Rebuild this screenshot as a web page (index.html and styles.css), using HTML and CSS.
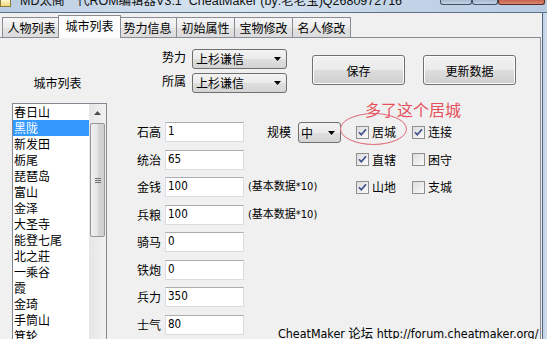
FILE: index.html
```html
<!DOCTYPE html>
<html>
<head>
<meta charset="utf-8">
<link rel="stylesheet" href="styles.css">
</head>
<body>
<div class="window">
  <div class="titlebar">
    <div class="app-icon"></div>
    <div class="title">MD太阁一代ROM编辑器V3.1&nbsp; CheatMaker (by:老老宝)Q2680972716</div>
    <div class="caption">
      <span class="cap min"></span><span class="cap max"></span><span class="cap close"></span>
    </div>
  </div>
  <div class="body">
    <div class="client">
      <div class="tabs">
        <div class="tab">人物列表</div>
        <div class="tab active">城市列表</div>
        <div class="tab">势力信息</div>
        <div class="tab">初始属性</div>
        <div class="tab">宝物修改</div>
        <div class="tab">名人修改</div>
      </div>
      <div class="panel">
        <div class="left">
          <div class="list-title">城市列表</div>
          <div class="listbox">
            <ul class="items">
              <li>春日山</li>
              <li class="sel">黑陇</li>
              <li>新发田</li>
              <li>栃尾</li>
              <li>琵琶岛</li>
              <li>富山</li>
              <li>金泽</li>
              <li>大圣寺</li>
              <li>能登七尾</li>
              <li>北之莊</li>
              <li>一乘谷</li>
              <li>霞</li>
              <li>金琦</li>
              <li>手筒山</li>
              <li>箕轮</li>
            </ul>
            <div class="vscroll">
              <div class="sb-btn"><svg width="7" height="4" viewBox="0 0 7 4"><path d="M0 4 L3.5 0 L7 4 Z" fill="#4d4d4d"/></svg></div>
              <div class="thumb"><div class="grip"><i></i><i></i><i></i></div></div>
            </div>
          </div>
        </div>
        <div class="right">
          <div class="top">
            <div class="combos">
              <div class="crow"><span class="clabel">势力</span><div class="combo wide"><span>上杉谦信</span><svg class="arrow" width="7" height="4" viewBox="0 0 7 4"><path d="M0 0 L7 0 L3.5 4 Z" fill="#000"/></svg></div></div>
              <div class="crow"><span class="clabel">所属</span><div class="combo wide"><span>上杉谦信</span><svg class="arrow" width="7" height="4" viewBox="0 0 7 4"><path d="M0 0 L7 0 L3.5 4 Z" fill="#000"/></svg></div></div>
            </div>
            <div class="buttons">
              <div class="btn">保存</div>
              <div class="btn">更新数据</div>
            </div>
          </div>
          <div class="form">
            <span class="flabel">石高</span><div class="input">1</div>
            <div class="scale"><span class="slabel">规模</span><div class="combo small"><span>中</span><svg class="arrow" width="7" height="4" viewBox="0 0 7 4"><path d="M0 0 L7 0 L3.5 4 Z" fill="#000"/></svg></div></div>
            <div class="cb"><span class="box on"><svg width="11" height="11" viewBox="0 0 11 11"><path d="M2 5.2 L4.3 7.8 L9 2.2" fill="none" stroke="#3b4f8a" stroke-width="1.7"/></svg></span>居城</div>
            <div class="cb"><span class="box on"><svg width="11" height="11" viewBox="0 0 11 11"><path d="M2 5.2 L4.3 7.8 L9 2.2" fill="none" stroke="#3b4f8a" stroke-width="1.7"/></svg></span>连接</div>

            <span class="flabel">统治</span><div class="input">65</div>
            <div class="empty"></div>
            <div class="cb"><span class="box on"><svg width="11" height="11" viewBox="0 0 11 11"><path d="M2 5.2 L4.3 7.8 L9 2.2" fill="none" stroke="#3b4f8a" stroke-width="1.7"/></svg></span>直辖</div>
            <div class="cb"><span class="box"></span>困守</div>

            <span class="flabel">金钱</span><div class="input">100</div>
            <div class="note">(基本数据*10)</div>
            <div class="cb"><span class="box on"><svg width="11" height="11" viewBox="0 0 11 11"><path d="M2 5.2 L4.3 7.8 L9 2.2" fill="none" stroke="#3b4f8a" stroke-width="1.7"/></svg></span>山地</div>
            <div class="cb"><span class="box"></span>支城</div>

            <span class="flabel">兵粮</span><div class="input">100</div>
            <div class="note full">(基本数据*10)</div>

            <span class="flabel">骑马</span><div class="input">0</div><div class="rest"></div>
            <span class="flabel">铁炮</span><div class="input">0</div><div class="rest"></div>
            <span class="flabel">兵力</span><div class="input">350</div><div class="rest"></div>
            <span class="flabel">士气</span><div class="input">80</div>
            <div class="footer">CheatMaker 论坛 http://forum.cheatmaker.org/</div>
          </div>
          <div class="ring"></div>
          <div class="remark">多了这个居城</div>
        </div>
      </div>
    </div>
    <div class="frame-right"></div>
  </div>
</div>
</body>
</html>
```
FILE: styles.css
```css
* { box-sizing: border-box; }
html, body { margin: 0; padding: 0; }
body {
  width: 547px;
  height: 339px;
  overflow: hidden;
  font-family: "Noto Sans CJK SC", sans-serif;
  font-size: 12px;
  color: #000;
}
.window {
  width: 547px;
  height: 339px;
  display: flex;
  flex-direction: column;
  overflow: hidden;
  background: #c6d7ea;
}
.titlebar {
  height: 13px;
  flex: none;
  display: flex;
  align-items: flex-end;
  background: linear-gradient(to right, #b8cbe1 0%, #cddcec 25%, #d6e3f0 45%, #c3d4e7 70%, #b9cce2 100%);
  border-bottom: 1px solid #5f7086;
  overflow: hidden;
}
.app-icon {
  width: 11px;
  height: 7px;
  align-self: flex-start;
  background: linear-gradient(#fdf6c8, #efd97a);
  border: 1px solid #8c7a3a;
  border-top: none;
  flex: none;
}
.title {
  margin-left: 9px;
  height: 16px;
  line-height: 16px;
  font-family: "Liberation Sans", "Noto Sans CJK SC", sans-serif;
  font-size: 12.5px;
  white-space: nowrap;
  color: #111;
  flex: none;
  margin-bottom: 3px;
}
.caption {
  margin-left: auto;
  display: flex;
  align-self: flex-start;
  height: 5px;
  margin-right: 2px;
}
.cap {
  display: block;
  height: 5px;
  border: 1px solid #445266;
  border-top: none;
  border-radius: 0 0 3px 3px;
  background: linear-gradient(#a9bbd1, #c4d2e2);
}
.cap.min { width: 32px; }
.cap.max { width: 26px; }
.cap.close { width: 47px; background: linear-gradient(#c7604a, #d98a74); border-color: #5a2a22; }

.body {
  flex: 1;
  display: flex;
  min-height: 0;
}
.client {
  width: 543px;
  flex: none;
  background: #f0f0f0;
  border-right: 1px solid #56667a;
  padding-top: 2px;
  display: flex;
  flex-direction: column;
}
.frame-right {
  flex: 1;
  background: linear-gradient(to right, #bfd1e6, #d2dfee);
}

/* tabs */
.tabs {
  display: flex;
  align-items: flex-end;
  height: 23px;
  padding-left: 2px;
  position: relative;
  z-index: 2;
  flex: none;
}
.tab {
  width: 59px;
  height: 20px;
  margin-bottom: 1px;
  border: 1px solid #898c95;
  border-bottom: none;
  margin-right: -1px;
  background: linear-gradient(#f6f6f6, #ececec 50%, #e2e2e2 51%, #dcdcdc);
  text-align: center;
  line-height: 19px;
  white-space: nowrap;
  flex: none;
}
.tab.active {
  width: 63px;
  height: 23px;
  margin: 0 -3px 0 -2px;
  background: #fcfcfc;
  line-height: 20px;
  position: relative;
  z-index: 3;
}

/* panel */
.panel {
  flex: 1;
  width: 541px;
  margin-top: -1px;
  border-top: 1px solid #898c95;
  border-right: 1px solid #898c95;
  display: flex;
  min-height: 0;
}
.left {
  width: 107px;
  flex: none;
  padding-left: 12px;
}
.list-title {
  height: 65px;
  padding-top: 36px;
  padding-right: 4px;
  line-height: 18px;
  text-align: center;
}
.listbox {
  width: 95px;
  height: 245px;
  border: 1px solid #828790;
  background: #fff;
  display: flex;
}
.items {
  list-style: none;
  margin: 0;
  padding: 0;
  width: 76px;
  flex: none;
}
.items li {
  height: 16px;
  line-height: 16px;
  padding-left: 1px;
  white-space: nowrap;
}
.items li.sel {
  background: #3399ff;
  color: #fff;
}
.vscroll {
  width: 17px;
  flex: none;
  background: linear-gradient(to right, #e6e6e6, #f2f2f2);
  display: flex;
  flex-direction: column;
  align-items: center;
}
.sb-btn {
  width: 17px;
  height: 17px;
  display: flex;
  align-items: center;
  justify-content: center;
  flex: none;
}
.thumb {
  width: 15px;
  height: 114px;
  margin-top: 2px;
  border: 1px solid #979797;
  border-radius: 2px;
  background: linear-gradient(to right, #f1f1f1, #e5e5e5 50%, #d6d6d6 51%, #d0d0d0);
  display: flex;
  align-items: center;
  justify-content: center;
}
.grip {
  display: flex;
  flex-direction: column;
  gap: 1px;
}
.grip i {
  display: block;
  width: 6px;
  height: 1px;
  background: #6f6f6f;
}

/* right side */
.right {
  flex: 1;
  position: relative;
  display: flex;
  flex-direction: column;
}
.top {
  height: 84px;
  flex: none;
  display: flex;
  padding-top: 11px;
}
.combos {
  margin-left: 55px;
  display: flex;
  flex-direction: column;
  gap: 4px;
}
.crow {
  display: flex;
  align-items: flex-start;
  gap: 6px;
}
.clabel {
  width: 24px;
  line-height: 15px;
  white-space: nowrap;
}
.combo {
  height: 20px;
  border: 1px solid #707070;
  border-radius: 3px;
  background: linear-gradient(#f3f3f3, #ebebeb 50%, #dfdfdf 51%, #d4d4d4);
  display: flex;
  align-items: center;
  padding-left: 3px;
  line-height: 18px;
}
.combo .arrow { margin-left: auto; margin-right: 5px; }
.combo.wide { width: 95px; }
.combo.small { width: 43px; height: 21px; padding-left: 2px; }
.buttons {
  margin-left: 25px;
  margin-top: 6px;
  display: flex;
  gap: 18px;
}
.btn {
  width: 93px;
  height: 30px;
  border: 1px solid #707070;
  border-radius: 3px;
  background: linear-gradient(#f2f2f2, #ebebeb 50%, #dddddd 51%, #cfcfcf);
  box-shadow: inset 0 0 0 1px #fcfcfc;
  display: flex;
  align-items: center;
  justify-content: center;
}

.form {
  display: grid;
  grid-template-columns: 54px 79px 104px 52px auto;
  grid-auto-rows: 20px;
  column-gap: 4px;
  row-gap: 7.5px;
}
.flabel {
  text-align: right;
  line-height: 20px;
  white-space: nowrap;
}
.input {
  background: #fff;
  border: 1px solid #d9dce2;
  border-top-color: #abadb3;
  padding-left: 2px;
  font-family: "DejaVu Sans Condensed", "DejaVu Sans", sans-serif;
  font-size: 11.5px;
  line-height: 17px;
}
.scale {
  padding-left: 19px;
  display: flex;
  align-items: flex-start;
  gap: 7px;
}
.slabel { line-height: 20px; white-space: nowrap; }
.cb {
  display: flex;
  align-items: center;
  white-space: nowrap;
  line-height: 20px;
}
.box {
  width: 13px;
  height: 13px;
  border: 1px solid #8e8f8f;
  background: linear-gradient(135deg, #dcdcdc, #fbfbfb);
  margin-right: 3px;
  display: flex;
  align-items: center;
  justify-content: center;
  flex: none;
}
.note {
  line-height: 20px;
  white-space: nowrap;
  font-family: "DejaVu Sans Condensed", "DejaVu Sans", "Noto Sans CJK SC", sans-serif;
  font-size: 11px;
}
.note.full { grid-column: 3 / 6; }
.rest { grid-column: 3 / 6; }
.footer {
  grid-column: 3 / 6;
  align-self: end;
  padding-left: 30px;
  margin-bottom: -6px;
  line-height: 14px;
  white-space: nowrap;
  font-family: "DejaVu Sans Condensed", "DejaVu Sans", "Noto Sans CJK SC", sans-serif;
  font-size: 12.4px;
}
.ring {
  position: absolute;
  left: 233px;
  top: 75px;
  width: 67px;
  height: 32px;
  border: 1px solid #e07480;
  border-radius: 50%;
}
.remark {
  position: absolute;
  left: 258px;
  top: 62px;
  font-size: 16px;
  line-height: 18px;
  color: #e5505c;
  white-space: nowrap;
}
```
